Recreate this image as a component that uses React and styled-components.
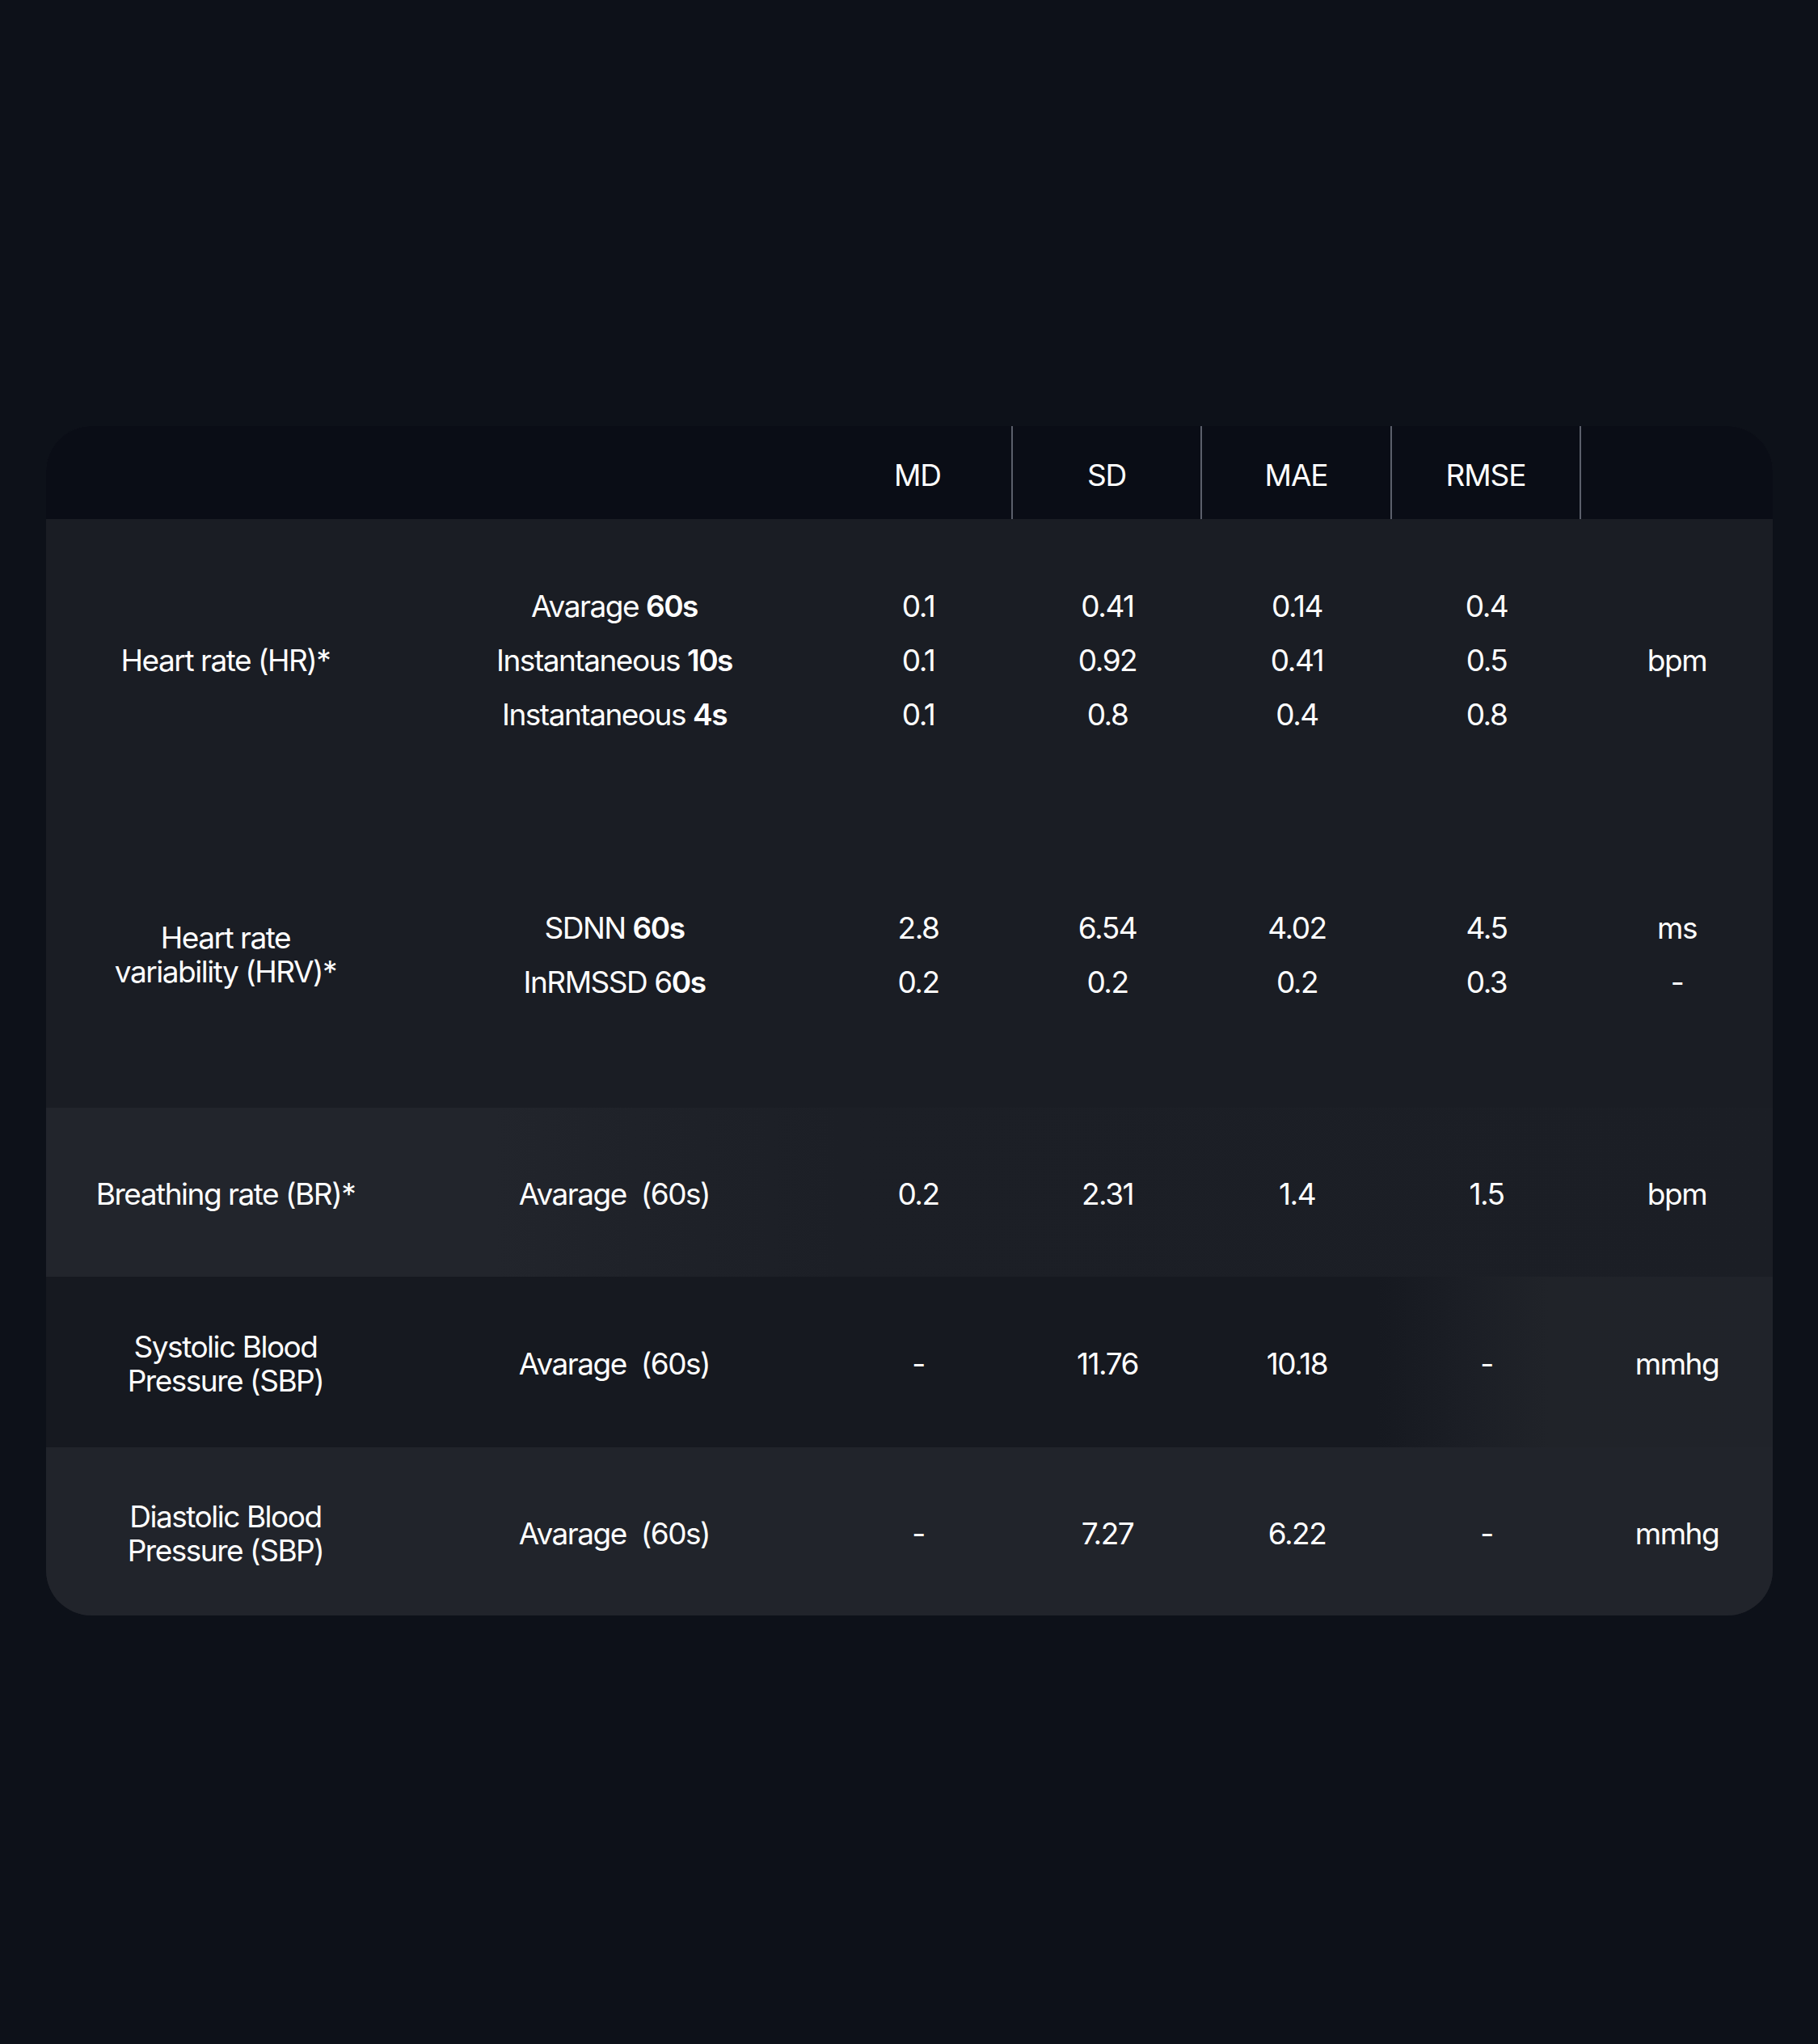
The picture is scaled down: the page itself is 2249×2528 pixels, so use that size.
import React from "react";
import styled, { createGlobalStyle } from "styled-components";

const GlobalStyle = createGlobalStyle`
    html, body {
        margin: 0;
        padding: 0;
        background-color: #0d1119;
    }
`;

const columns = ["MD", "SD", "MAE", "RMSE"];

const rows = [
    {
        name: ["Heart rate (HR)*"],
        height: 350,
        shift: 0,
        bg: "#1a1d24",
        lines: [
            { label: "Avarage ", strong: "60s", values: ["0.1", "0.41", "0.14", "0.4"] },
            { label: "Instantaneous ", strong: "10s", values: ["0.1", "0.92", "0.41", "0.5"] },
            { label: "Instantaneous ", strong: "4s", values: ["0.1", "0.8", "0.4", "0.8"] },
        ],
        units: ["bpm"],
    },
    {
        name: ["Heart rate", "variability (HRV)*"],
        height: 378,
        shift: 0,
        bg: "#1a1d24",
        lines: [
            { label: "SDNN ", strong: "60s", values: ["2.8", "6.54", "4.02", "4.5"] },
            { label: "InRMSSD 6", strong: "0s", values: ["0.2", "0.2", "0.2", "0.3"] },
        ],
        units: ["ms", "-"],
    },
    {
        name: ["Breathing rate (BR)*"],
        height: 209,
        shift: 5,
        bg: "linear-gradient(90deg, #22252c 0%, #22252c 26%, #1f2229 34%, #1c1f26 46%, #1b1e25 100%)",
        lines: [{ label: "Avarage\u00a0 (60s)", values: ["0.2", "2.31", "1.4", "1.5"] }],
        units: ["bpm"],
    },
    {
        name: ["Systolic Blood", "Pressure (SBP)"],
        height: 211,
        shift: 5,
        bg: "linear-gradient(90deg, #161920 0%, #161920 77%, #1b1e25 82%, #202329 87%, #20232a 100%)",
        lines: [{ label: "Avarage\u00a0 (60s)", values: ["-", "11.76", "10.18", "-"] }],
        units: ["mmhg"],
    },
    {
        name: ["Diastolic Blood", "Pressure (SBP)"],
        height: 208,
        shift: 5,
        bg: "#21242b",
        lines: [{ label: "Avarage\u00a0 (60s)", values: ["-", "7.27", "6.22", "-"] }],
        units: ["mmhg"],
    },
];

const App = () => {
    return (
        <Page>
            <GlobalStyle />
            <Card>
                <HeaderRow>
                    <HeadCell />
                    <HeadCell />
                    {columns.map((c) => (
                        <HeadCell key={c} divider>{c}</HeadCell>
                    ))}
                    <HeadCell />
                </HeaderRow>

                {rows.map((row, i) => (
                    <Row key={i} height={row.height} bg={row.bg} shift={row.shift}>
                        <Cell>
                            {row.name.map((n) => (
                                <NameLine key={n}>{n}</NameLine>
                            ))}
                        </Cell>
                        <Cell>
                            {row.lines.map((l) => (
                                <Line key={l.label + l.strong}>
                                    {l.label}
                                    {l.strong && <Strong>{l.strong}</Strong>}
                                </Line>
                            ))}
                        </Cell>
                        {columns.map((c, ci) => (
                            <Cell key={c}>
                                {row.lines.map((l, li) => (
                                    <Line key={li}>{l.values[ci]}</Line>
                                ))}
                            </Cell>
                        ))}
                        <Cell>
                            {row.units.map((u, ui) => (
                                <Line key={ui}>{u}</Line>
                            ))}
                        </Cell>
                    </Row>
                ))}
            </Card>
        </Page>
    );
};

const grid = `
    display: grid;
    grid-template-columns: 444px 518px 234px 234px 235px 234px 1fr;
`;

const Page = styled.div`
    background-color: #0d1119;
    min-height: 2528px;
    box-sizing: border-box;
    padding: 527px 56px 0 57px;
    font-family: Inter, "Liberation Sans", sans-serif;
    color: #ffffff;
`;

const Card = styled.div`
    width: 2136px;
    border-radius: 56px;
    overflow: hidden;
    background-color: #1a1d24;
`;

const HeaderRow = styled.div`
    ${grid}
    height: 115px;
    background-color: #0a0d16;
`;

const HeadCell = styled.div`
    display: flex;
    align-items: center;
    justify-content: center;
    font-size: 37px;
    letter-spacing: -0.03em;
    border-right: ${(p) => (p.divider ? "2px solid #5b5f6b" : "none")};
    padding-top: 6px;
`;

const Row = styled.div`
    ${grid}
    box-sizing: border-box;
    height: ${(p) => p.height}px;
    padding-top: ${(p) => p.shift}px;
    background: ${(p) => p.bg};
`;

const Cell = styled.div`
    display: flex;
    flex-direction: column;
    align-items: center;
    justify-content: center;
    gap: 25px;
    text-align: center;
`;

const NameLine = styled.div`
    font-size: 37px;
    line-height: 42px;
    letter-spacing: -0.04em;
    margin-top: -25px;

    &:first-child {
        margin-top: 0;
    }
`;

const Line = styled.div`
    font-size: 37px;
    line-height: 42px;
    letter-spacing: -0.04em;
    white-space: pre;
`;

const Strong = styled.span`
    font-weight: 600;
`;

export default App;
